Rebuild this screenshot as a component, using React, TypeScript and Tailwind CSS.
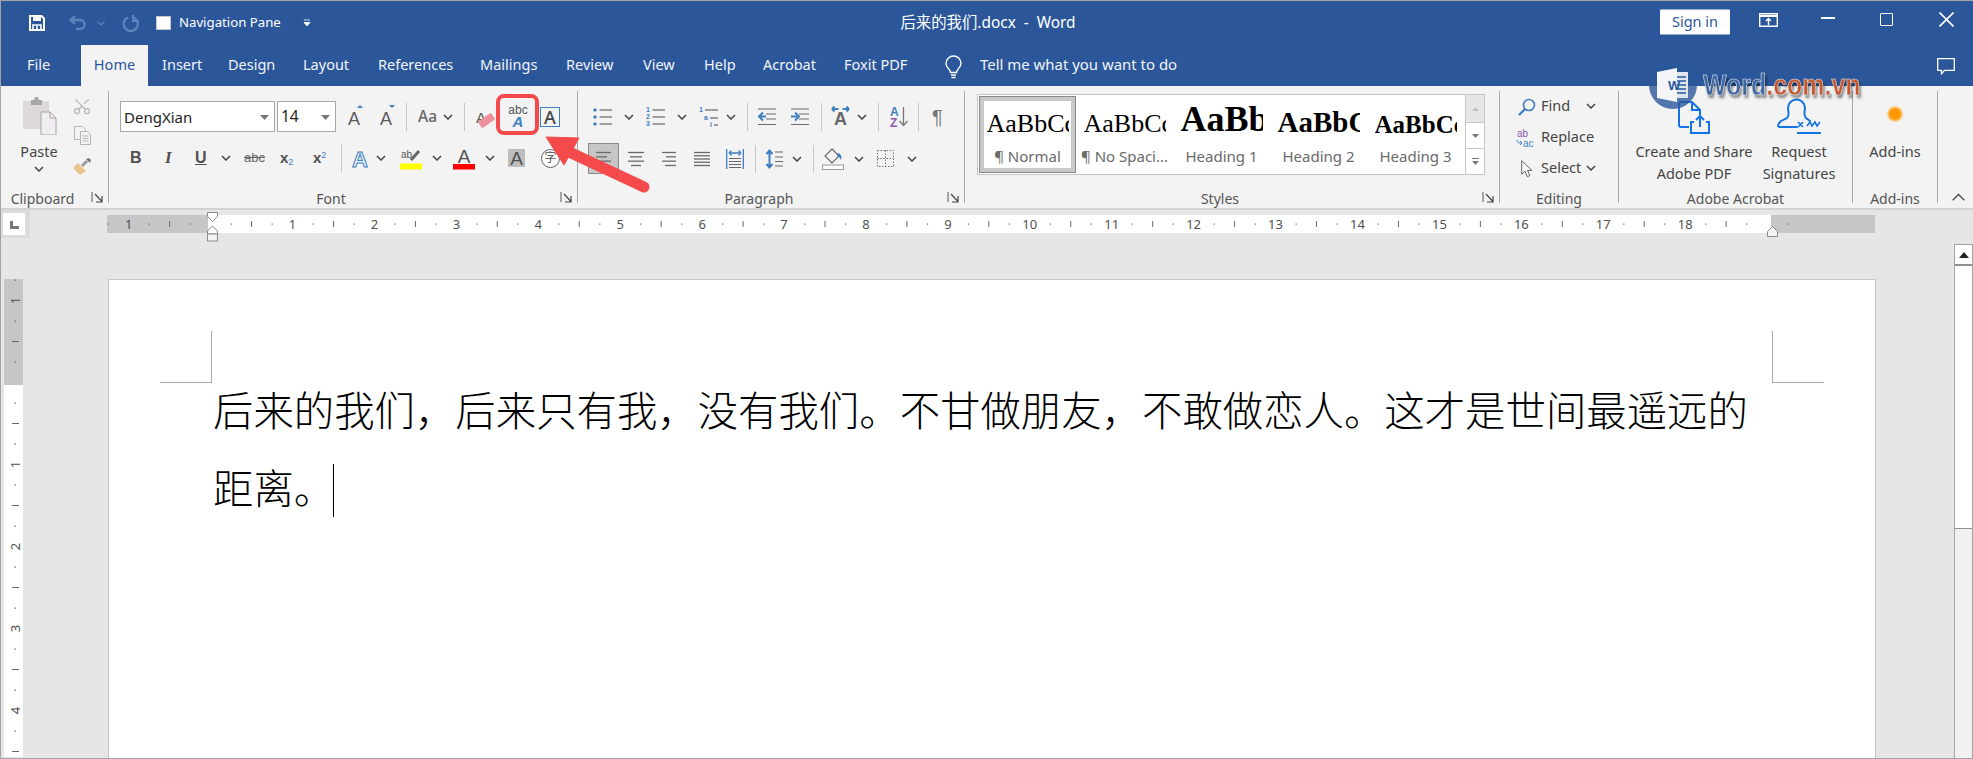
import { Scissors } from "lucide-react";

const GRAY = "#5a5a5a";
const BLUE = "#3f7fbf";
const SANS = "Liberation Sans";

function Chev({ className = "" }: { className?: string }) {
  return (
    <svg width="10" height="6" viewBox="0 0 10 6" className={`shrink-0 ${className}`}>
      <path d="M1 1l4 4 4-4" fill="none" stroke="#444" strokeWidth="1.5" />
    </svg>
  );
}

function Launcher() {
  return (
    <svg width="12" height="12" viewBox="0 0 12 12">
      <path d="M1 1v10" stroke="#555" strokeWidth="1" />
      <path d="M4 3l6.5 7M11 5v6H5" fill="none" stroke="#444" strokeWidth="1.2" />
    </svg>
  );
}

function Sep({ className = "", h = "h-[28px]" }: { className?: string; h?: string }) {
  return <div className={`w-px shrink-0 bg-[#c6c6c6] ${h} ${className}`} />;
}

function GroupLabel({ text, launcher = true }: { text: string; launcher?: boolean }) {
  return (
    <div className="-mb-[3px] mt-auto flex h-[14px] shrink-0 items-center">
      <div className="flex-1 text-center text-[14px] leading-[14px] text-[#555]">{text}</div>
      {launcher && (
        <div className="flex w-[24px] -translate-y-[2px] justify-end pr-[5px]">
          <Launcher />
        </div>
      )}
    </div>
  );
}

function Glyph({ w, h = 22, children, className = "" }: { w: number; h?: number; children: React.ReactNode; className?: string }) {
  return (
    <svg width={w} height={h} viewBox={`0 0 ${w} ${h}`} className={`shrink-0 overflow-visible ${className}`}>
      {children}
    </svg>
  );
}

function Lines({ w, rows }: { w: number; rows: [number, number][] }) {
  return (
    <Glyph w={w} h={20}>
      {rows.map(([x, l], i) => (
        <path key={i} d={`M${x} ${3.5 + (i * 13) / (rows.length - 1)}h${l}`} stroke="#6a6a6a" strokeWidth="1.3" />
      ))}
    </Glyph>
  );
}

function Bullets() {
  return (
    <Glyph w={19} h={20}>
      {[3, 10, 17].map((y) => (
        <g key={y}>
          <circle cx="2" cy={y} r="1.7" fill={BLUE} />
          <path d={`M6.5 ${y}h12.5`} stroke="#666" strokeWidth="1.2" />
        </g>
      ))}
    </Glyph>
  );
}

function Numbers() {
  return (
    <Glyph w={19} h={20}>
      {[5, 12, 19].map((y, i) => (
        <g key={y}>
          <text x="0" y={y} fontSize="7" fontWeight="700" fontFamily={SANS} fill={BLUE}>
            {i + 1}
          </text>
          <path d={`M6.5 ${y - 2}h12.5`} stroke="#666" strokeWidth="1.2" />
        </g>
      ))}
    </Glyph>
  );
}

function Multilevel() {
  return (
    <Glyph w={19} h={20}>
      <text x="0" y="5" fontSize="7" fontWeight="700" fontFamily={SANS} fill={BLUE}>1</text>
      <path d="M6 3h13" stroke="#666" strokeWidth="1.2" />
      <text x="5" y="13" fontSize="7" fontWeight="700" fontFamily={SANS} fill={BLUE}>a</text>
      <path d="M11 11h8" stroke="#666" strokeWidth="1.2" />
      <text x="11" y="20" fontSize="7" fontWeight="700" fontFamily={SANS} fill={BLUE}>i</text>
      <path d="M15 18h4" stroke="#666" strokeWidth="1.2" />
    </Glyph>
  );
}

function Indent({ flip }: { flip?: boolean }) {
  return (
    <Glyph w={18} h={18}>
      <path d="M0 1h18M8 6h10M8 11h10M0 16.5h18" stroke="#6a6a6a" strokeWidth="1.2" />
      {flip ? (
        <path d="M0 8.5h6M4 4.5l4 4-4 4" fill="none" stroke={BLUE} strokeWidth="2" />
      ) : (
        <path d="M8 8.5H2M5 4.5l-4 4 4 4" fill="none" stroke={BLUE} strokeWidth="2" />
      )}
    </Glyph>
  );
}

function StyleItem({ preview, label, selected }: { preview: React.ReactNode; label: string; selected?: boolean }) {
  return (
    <div className={`flex h-full flex-col items-center ${selected ? "w-[97px] border border-[#8a8a8a] bg-[#c9c9c9] p-[4px]" : "w-[97px]"}`}>
      <div className={`flex h-full w-full flex-col items-center bg-white ${selected ? "" : "pt-[5px]"}`}>
        <div className="flex h-[40px] w-[82px] items-end overflow-hidden whitespace-nowrap pb-[4px] font-['Liberation_Serif',serif] leading-none text-black">
          {preview}
        </div>
        <div className="mt-[4.5px] whitespace-nowrap text-[15px] leading-[20px] text-[#6a6a6a]">{label}</div>
      </div>
    </div>
  );
}

function HRuler() {
  const ticks = Array.from({ length: 83 }, (_, n) => n - 5);
  return (
    <svg width="1768" height="18" viewBox="0 0 1768 18" className="absolute left-0 top-0">
      {ticks.map((i) => {
        const x = 103.6 + i * 20.48;
        // origin and the 19cm mark sit under the indent markers
        if (i === 0 || i === 76) return null;
        if (i % 4 === 0)
          return (
            <text key={i} x={x} y="14" textAnchor="middle" fontSize="13" fontFamily="Noto Sans" fill="#505050">
              {Math.abs(i / 4)}
            </text>
          );
        if (i % 2 === 0) return <path key={i} d={`M${x} 6v6`} stroke="#666" strokeWidth="1" />;
        return <rect key={i} x={x - 0.5} y="8.5" width="1.2" height="1.2" fill="#666" />;
      })}
    </svg>
  );
}

function VRuler() {
  const ticks = Array.from({ length: 25 }, (_, n) => n - 5);
  return (
    <svg width="19" height="478" viewBox="0 0 19 478" className="absolute left-0 top-0">
      {ticks.map((i) => {
        const y = 103.5 + i * 20.5;
        if (i === 0) return null;
        if (i % 4 === 0)
          return (
            <text key={i} x="11" y={y} textAnchor="middle" fontSize="13" fontFamily="Noto Sans" fill="#505050" transform={`rotate(-90 11 ${y}) translate(0 4.5)`}>
              {Math.abs(i / 4)}
            </text>
          );
        if (i % 2 === 0) return <path key={i} d={`M8 ${y}h7`} stroke="#666" strokeWidth="1" />;
        return <rect key={i} x="10.5" y={y - 0.5} width="1.3" height="1.3" fill="#666" />;
      })}
    </svg>
  );
}

export default function App() {
  return (
    <div className="relative flex h-[759px] w-[1973px] flex-col overflow-hidden border-b border-l border-t border-[#a3a3a3] bg-[#e6e6e6] font-['Noto_Sans','Noto_Sans_CJK_SC',sans-serif]">
      {/* title bar */}
      <div className="flex h-[44px] shrink-0 items-center bg-[#2b579a] text-white">
        <svg width="16" height="16" viewBox="0 0 16 16" className="ml-[28px] shrink-0">
          <path d="M1 1h11.5L15 3.5V15H1z" fill="none" stroke="#fff" strokeWidth="2" />
          <path d="M4 1h8v5H4z" fill="#fff" />
          <path d="M4 15v-5h8v5M8 11v4" fill="none" stroke="#fff" strokeWidth="1.6" />
        </svg>
        <svg width="17" height="16" viewBox="0 0 17 16" className="ml-[24px] shrink-0">
          <path d="M2 5h9a4.5 4.5 0 0 1 0 9H7" fill="none" stroke="#5b82bb" strokeWidth="2.4" />
          <path d="M6 1L1.5 5 6 9" fill="none" stroke="#5b82bb" strokeWidth="2.4" />
        </svg>
        <svg width="8" height="5" viewBox="0 0 8 5" className="ml-[11px] shrink-0">
          <path d="M.5.500L4 4 7.500.5" fill="none" stroke="#5b82bb" strokeWidth="1.2" />
        </svg>
        <svg width="18" height="18" viewBox="0 0 18 18" className="ml-[17px] shrink-0">
          <path d="M6 3.500a7 7 0 1 0 5.500 0" fill="none" stroke="#5b82bb" strokeWidth="2.4" />
          <path d="M11 1v6h6" fill="none" stroke="#5b82bb" strokeWidth="2.2" />
        </svg>
        <div className="ml-[16px] h-[14px] w-[15px] shrink-0 border border-[#c8c8c8] bg-white" />
        <span className="ml-[8px] w-[99px] shrink-0 whitespace-nowrap text-[13.2px] leading-none">Navigation Pane</span>
        <svg width="8" height="8" viewBox="0 0 8 8" className="ml-[25px] shrink-0">
          <path d="M1 1h6M1 3.500h6l-3 3.500z" fill="#fff" stroke="#fff" strokeWidth=".8" />
        </svg>
        <div className="ml-[589px] flex w-[176px] shrink-0 justify-center whitespace-nowrap text-[15.4px] leading-none">后来的我们.docx &nbsp;-&nbsp; Word</div>
        <div className="ml-[584px] flex h-[25px] w-[70px] shrink-0 -translate-y-[1.5px] items-center justify-center rounded-[1px] bg-white text-[14.5px] text-[#2b579a]">Sign in</div>
        <svg width="19" height="14" viewBox="0 0 19 14" className="ml-[29px] shrink-0 -translate-y-[3px]">
          <path d="M.7.700h17.600v12.600H.7z" fill="none" stroke="#fff" strokeWidth="1.4" />
          <path d="M1 3h17" stroke="#fff" strokeWidth="2" />
          <path d="M9.500 12V6M7 8l2.500-2.500L12 8" fill="none" stroke="#fff" strokeWidth="1.4" />
        </svg>
        <div className="ml-[43px] h-[1.5px] w-[14px] shrink-0 -translate-y-[5px] bg-white" />
        <div className="ml-[45px] h-[13px] w-[13px] shrink-0 -translate-y-[4px] rounded-[1px] border-[1.5px] border-white" />
        <svg width="15" height="15" viewBox="0 0 15 15" className="ml-[46px] shrink-0 -translate-y-[4px]">
          <path d="M.5.500l14 14M14.500.500l-14 14" stroke="#fff" strokeWidth="1.6" />
        </svg>
      </div>

      {/* tabs */}
      <div className="flex h-[41px] shrink-0 items-start bg-[#2b579a] pt-[11px] text-[14.5px] leading-[16px] text-[#f1f4f9]">
        <span className="ml-[26px] w-[25px] shrink-0 whitespace-nowrap">File</span>
        <div className="-mt-[11px] ml-[29px] flex h-[41px] w-[67px] shrink-0 justify-center bg-[#f3f3f3] pt-[11px] text-[#2b579a]">Home</div>
        <span className="ml-[14px] w-[39px] shrink-0 whitespace-nowrap">Insert</span>
        <span className="ml-[27px] w-[48px] shrink-0 whitespace-nowrap">Design</span>
        <span className="ml-[27px] w-[47px] shrink-0 whitespace-nowrap">Layout</span>
        <span className="ml-[28px] w-[74px] shrink-0 whitespace-nowrap">References</span>
        <span className="ml-[28px] w-[58px] shrink-0 whitespace-nowrap">Mailings</span>
        <span className="ml-[28px] w-[49px] shrink-0 whitespace-nowrap">Review</span>
        <span className="ml-[28px] w-[33px] shrink-0 whitespace-nowrap">View</span>
        <span className="ml-[28px] w-[32px] shrink-0 whitespace-nowrap">Help</span>
        <span className="ml-[27px] w-[54px] shrink-0 whitespace-nowrap">Acrobat</span>
        <span className="ml-[27px] w-[65px] shrink-0 whitespace-nowrap">Foxit PDF</span>
        <svg width="17" height="24" viewBox="0 0 17 24" className="-mt-px ml-[36px] shrink-0">
          <path d="M5.500 17.500c0-3-4.500-5-4.500-9a7.500 7.500 0 0 1 15 0c0 4-4.500 6-4.500 9z" fill="none" stroke="#fff" strokeWidth="1.4" />
          <path d="M6 20h5M6.500 22.500h4" stroke="#fff" strokeWidth="1.4" />
        </svg>
        <span className="ml-[18px] w-[196px] shrink-0 whitespace-nowrap text-[14.95px]">Tell me what you want to do</span>
        <svg width="18" height="17" viewBox="0 0 18 17" className="ml-[761px] mt-[2px] shrink-0">
          <path d="M.7.700h16.600v11.600H7.500l-3 3.500v-3.500H.7z" fill="none" stroke="#fff" strokeWidth="1.3" />
        </svg>
      </div>

      {/* ribbon */}
      <div className="flex h-[124px] shrink-0 border-b-2 border-[#d2d2d2] bg-[#f3f3f3] py-[5px]">
        {/* clipboard */}
        <div className="flex w-[108px] shrink-0 border-r border-[#a8a8a8]">
          <div className="flex w-full flex-col">
            <div className="flex">
              <div className="ml-[19px] mt-[6px] flex w-[38px] shrink-0 flex-col items-center">
                <svg width="34" height="38" viewBox="0 0 34 38" className="translate-x-px">
                  <path d="M0 4h26v28H0z" fill="#dcd8dc" />
                  <path d="M8 3h3l1-3h3l1 3h3v5H8z" fill="#a8a4a8" />
                  <path d="M18 15h9l6 6v17H18z" fill="#f0eef0" stroke="#a8a4a8" />
                  <path d="M27 15v6h6" fill="none" stroke="#a8a4a8" />
                </svg>
                <span className="mt-[6px] text-[14.5px] leading-[20px] text-[#444]">Paste</span>
                <Chev className="mt-[5px]" />
              </div>
              <div className="ml-[15px] mt-[5px] flex w-[18px] shrink-0 flex-col items-center">
                <Scissors size={20} strokeWidth={1.5} color="#b5b5b5" className="-rotate-90" />
                <svg width="17" height="19" viewBox="0 0 17 19" className="mt-[10px]">
                  <path d="M.5.500h8l3 3v10H.5z" fill="#f3f3f3" stroke="#b5b5b5" />
                  <path d="M6.500 5.500h7l3 3v10h-10z" fill="#f3f3f3" stroke="#b5b5b5" />
                  <path d="M8.500 10h6M8.500 12.500h6M8.500 15h6" stroke="#b5b5b5" />
                </svg>
                <svg width="18" height="17" viewBox="0 0 18 17" className="mt-[13px]">
                  <path d="M9 8l5-5" stroke="#9a9a9a" strokeWidth="3" />
                  <path d="M13 1l3-1 2 2-1 3z" fill="#777" />
                  <path d="M5 5l8 8-6 4-7-7z" fill="#e9c48e" />
                </svg>
              </div>
            </div>
            <GroupLabel text="Clipboard" />
          </div>
        </div>

        {/* font */}
        <div className="flex w-[469px] shrink-0 flex-col border-r border-[#a8a8a8]">
          <div className="mt-[10px] flex h-[31px] items-center">
            <div className="ml-[11px] flex h-[31px] w-[155px] shrink-0 items-center justify-between border border-[#a8a8a8] bg-white pl-[3px] pr-[5px] pt-px text-[15px] text-[#222]">
              DengXian
              <svg width="9" height="5" viewBox="0 0 9 5"><path d="M0 0h9L4.500 5z" fill="#777" /></svg>
            </div>
            <div className="ml-[2px] flex h-[31px] w-[59px] shrink-0 items-center justify-between border border-[#a8a8a8] bg-white pl-[3px] pr-[5px] pt-px text-[15.5px] text-[#222]">
              14
              <svg width="9" height="5" viewBox="0 0 9 5"><path d="M0 0h9L4.500 5z" fill="#777" /></svg>
            </div>
            <Glyph w={14} className="ml-[12px] -translate-y-[2px]">
              <text x="0" y="21" fontSize="18" fontFamily={SANS} fill={GRAY}>A</text>
              <path d="M9 4l3-3 3 3z" fill={BLUE} />
            </Glyph>
            <Glyph w={14} className="ml-[18px] -translate-y-[2px]">
              <text x="0" y="21" fontSize="18" fontFamily={SANS} fill={GRAY}>A</text>
              <path d="M9 1h6l-3 3z" fill={BLUE} />
            </Glyph>
            <Sep className="ml-[12px]" />
            <span className="ml-[11px] w-[17px] shrink-0 whitespace-nowrap text-[15.5px] font-medium text-[#666]">Aa</span>
            <Chev className="ml-[8px]" />
            <Sep className="ml-[11px]" />
            <Glyph w={19} className="ml-[11px]">
              <text x="0" y="16.500" fontSize="15" fontFamily={SANS} fill={GRAY}>A</text>
              <rect x="2.500" y="10.500" width="16" height="8" rx="1.500" fill="#ee8f9c" transform="rotate(-35 10.500 14.500)" />
            </Glyph>
            <div className="ml-px flex h-[41px] w-[43px] shrink-0 -translate-y-[2px] items-center justify-center rounded-[8px] border-4 border-[#f44a4c]">
              <Glyph w={22} h={26} className="translate-y-[2px]">
                <text x="11" y="10" textAnchor="middle" fontSize="12" fontFamily={SANS} fill="#555">abc</text>
                <text x="11" y="23" textAnchor="middle" fontSize="15" fontWeight="700" fontStyle="italic" fontFamily={SANS} fill={BLUE}>A</text>
              </Glyph>
            </div>
            <div className="ml-px flex h-[20px] w-[20px] shrink-0 items-center justify-center border border-[#3f7fbf] text-[18px] font-medium leading-none text-[#444]">A</div>
          </div>
          <div className="mt-[11px] flex h-[30px] items-center text-[#505050]">
            <span className="ml-[21px] w-[9px] shrink-0 font-['Liberation_Sans'] text-[16px] font-bold">B</span>
            <span className="ml-[26px] w-[7px] shrink-0 font-['Liberation_Serif'] text-[17px] font-bold italic">I</span>
            <span className="ml-[23px] w-[11px] shrink-0 font-['Liberation_Sans'] text-[16px] font-bold underline">U</span>
            <Chev className="ml-[15px]" />
            <span className="ml-[13px] w-[20px] shrink-0 font-['Liberation_Sans'] text-[13px] text-[#666] line-through">abc</span>
            <span className="ml-[16px] w-[15px] shrink-0 whitespace-nowrap font-['Liberation_Sans'] text-[15px] font-bold">
              x<sub className="text-[9px] font-normal text-[#3f7fbf]">2</sub>
            </span>
            <span className="ml-[18px] w-[15px] shrink-0 whitespace-nowrap font-['Liberation_Sans'] text-[15px] font-bold">
              x<sup className="text-[9px] font-normal text-[#3f7fbf]">2</sup>
            </span>
            <Sep className="ml-[13px]" />
            <Glyph w={14} className="ml-[11px]">
              <text x="7" y="20" textAnchor="middle" fontSize="22" fontWeight="700" fontFamily={SANS} fill="#e8f1fb" stroke={BLUE} strokeWidth="1">A</text>
            </Glyph>
            <Chev className="ml-[9px]" />
            <Glyph w={22} className="ml-[14px]">
              <text x="1" y="11" fontSize="10" fontFamily={SANS} fill="#555">ab</text>
              <path d="M11 13l8-9" stroke="#666" strokeWidth="3" />
              <rect x="0" y="16.500" width="22" height="6" fill="#ffff00" />
            </Glyph>
            <Chev className="ml-[10px]" />
            <Glyph w={22} className="ml-[11px]">
              <text x="11" y="15.500" textAnchor="middle" fontSize="19" fontFamily={SANS} fill="#505050">A</text>
              <rect x="0" y="17" width="22" height="5.500" fill="#ff0000" />
            </Glyph>
            <Chev className="ml-[10px]" />
            <div className="ml-[13px] flex h-[18px] w-[17px] shrink-0 items-center justify-center bg-[#bdbdbd] font-['Liberation_Sans'] text-[19px] leading-none text-[#505050]">A</div>
            <div className="ml-[16px] flex h-[19px] w-[19px] shrink-0 items-center justify-center rounded-full border border-[#666] bg-white text-[12px] leading-none text-[#555]">字</div>
          </div>
          <GroupLabel text="Font" />
        </div>

        {/* paragraph */}
        <div className="flex w-[387px] shrink-0 flex-col border-r border-[#a8a8a8]">
          <div className="mt-[10px] flex h-[31px] items-center">
            <div className="ml-[15px]"><Bullets /></div>
            <Chev className="ml-[12px]" />
            <div className="ml-[12px]"><Numbers /></div>
            <Chev className="ml-[12px]" />
            <div className="ml-[12px]"><Multilevel /></div>
            <Chev className="ml-[8px]" />
            <Sep className="ml-[11px]" />
            <div className="ml-[10px]"><Indent /></div>
            <div className="ml-[15px]"><Indent flip /></div>
            <Sep className="ml-[12px]" />
            <Glyph w={19} className="ml-[9px] -translate-y-px">
              <text x="9.500" y="20" textAnchor="middle" fontSize="18" fontWeight="700" fontFamily={SANS} fill="#666">A</text>
              <path d="M1 4h6.500M1 4l2.500-2.500M1 4l2.500 2.500M18 4h-6.500M18 4l-2.500-2.500M18 4l-2.500 2.500" fill="none" stroke={BLUE} strokeWidth="1.800" />
            </Glyph>
            <Chev className="ml-[7px]" />
            <Sep className="ml-[11px]" />
            <Glyph w={18} className="ml-[11px]">
              <text x="0" y="10" fontSize="12" fontWeight="700" fontFamily={SANS} fill={BLUE}>A</text>
              <text x="0" y="21" fontSize="12" fontWeight="700" fontFamily={SANS} fill="#8a57b0">Z</text>
              <path d="M13.500 1v18M9.500 15l4 4.500 4-4.500" fill="none" stroke="#777" strokeWidth="1.300" />
            </Glyph>
            <Sep className="ml-[10px]" />
            <span className="ml-[13px] w-[11px] shrink-0 font-['Liberation_Sans'] text-[20px] leading-none text-[#777]">¶</span>
          </div>
          <div className="mt-[11px] flex h-[31px] items-center">
            <div className="ml-[10px] flex h-[31px] w-[31px] shrink-0 items-center justify-center border border-[#8a8a8a] bg-[#c6c6c6]">
              <Lines w={15} rows={[[0, 15], [0, 11], [0, 15], [0, 11]]} />
            </div>
            <div className="ml-[9px]"><Lines w={16} rows={[[0, 16], [2, 12], [0, 16], [3, 10]]} /></div>
            <div className="ml-[18px]"><Lines w={14} rows={[[0, 14], [4, 10], [0, 14], [3, 11]]} /></div>
            <div className="ml-[18px]"><Lines w={16} rows={[[0, 16], [0, 16], [0, 16], [0, 16], [0, 16]]} /></div>
            <Glyph w={18} h={20} className="ml-[16px]">
              <path d="M.7 0v20M17.300 0v20" stroke={BLUE} strokeWidth="1.300" />
              <path d="M3 4h12M3 4l2.500-2.500M3 4l2.500 2.500M15 4l-2.500-2.500M15 4l-2.500 2.500" fill="none" stroke={BLUE} strokeWidth="1.300" />
              <path d="M3 9.500h12M3 12.500h12M3 15.500h12M3 18.500h12" stroke="#666" strokeWidth="1.100" />
            </Glyph>
            <Sep className="ml-[11px]" />
            <Glyph w={17} h={20} className="ml-[10px]">
              <path d="M3.500 2v16M.5 5l3-3.500 3 3.500M.5 15l3 3.500 3-3.500" fill="none" stroke={BLUE} strokeWidth="2" />
              <path d="M9 3h8M9 8h8M9 12.500h8M9 17h8" stroke="#666" strokeWidth="1.200" />
            </Glyph>
            <Chev className="ml-[9px]" />
            <Sep className="ml-[11px]" />
            <Glyph w={22} h={22} className="ml-[8px]">
              <path d="M10 1l7 7-7 7-7-7z" fill="#f3f3f3" stroke="#666" strokeWidth="1.200" />
              <path d="M16 5c3 1 4 4 3 7-1-2-2-3-4-4z" fill={BLUE} />
              <rect x=".5" y="17" width="21" height="4.500" fill="#fff" stroke="#999" />
            </Glyph>
            <Chev className="ml-[10px]" />
            <Glyph w={17} h={17} className="ml-[13px]">
              <path d="M.5.500h16v16H.5zM8.500.500v16M.5 8.500h16" fill="none" stroke="#777" strokeDasharray="1.500 1.500" />
            </Glyph>
            <Chev className="ml-[13px]" />
          </div>
          <GroupLabel text="Paragraph" />
        </div>

        {/* styles */}
        <div className="flex w-[535px] shrink-0 flex-col border-r border-[#a8a8a8]">
          <div className="ml-[12px] mt-[3px] flex h-[81px] w-[508px] border border-[#c6c6c6] bg-white">
            <div className="flex h-full flex-1 p-px">
              <StyleItem selected preview={<span className="text-[26px]">AaBbCc</span>} label="¶ Normal" />
              <StyleItem preview={<span className="text-[26px]">AaBbCc</span>} label="¶ No Spaci..." />
              <StyleItem preview={<span className="text-[36px] font-bold">AaBb</span>} label="Heading 1" />
              <StyleItem preview={<span className="text-[29px] font-bold">AaBbC</span>} label="Heading 2" />
              <StyleItem preview={<span className="text-[25px] font-bold">AaBbCc</span>} label="Heading 3" />
            </div>
            <div className="flex w-[19px] shrink-0 flex-col border-l border-[#c6c6c6]">
              <div className="flex h-[28px] items-center justify-center border-b border-[#c6c6c6] bg-[#e6e6e6]">
                <svg width="7" height="4" viewBox="0 0 7 4"><path d="M0 4l3.500-4L7 4z" fill="#c0c0c0" /></svg>
              </div>
              <div className="flex h-[26px] items-center justify-center border-b border-[#c6c6c6]">
                <svg width="7" height="4" viewBox="0 0 7 4"><path d="M0 0l3.500 4L7 0z" fill="#777" /></svg>
              </div>
              <div className="flex flex-1 items-center justify-center">
                <svg width="7" height="7" viewBox="0 0 7 7"><path d="M0 0h7v1H0zM0 3h7L3.500 7z" fill="#777" /></svg>
              </div>
            </div>
          </div>
          <GroupLabel text="Styles" />
        </div>

        {/* editing */}
        <div className="flex w-[119px] shrink-0 flex-col border-r border-[#a8a8a8] text-[14.5px] leading-none text-[#444]">
          <div className="flex h-[31px] items-center">
            <svg width="20" height="18" viewBox="0 0 20 18" className="ml-[17px] shrink-0">
              <circle cx="12" cy="7" r="5.500" fill="none" stroke={BLUE} strokeWidth="1.600" />
              <path d="M8 11l-6 6" stroke={BLUE} strokeWidth="2.400" />
            </svg>
            <span className="ml-[4px] w-[30px] shrink-0 -translate-y-px">Find</span>
            <Chev className="ml-[15px] -translate-y-px" />
          </div>
          <div className="flex h-[31px] items-center">
            <Glyph w={20} h={18} className="ml-[16px]">
              <text x="1" y="8" fontSize="10" fontFamily={SANS} fill="#8a57b0">ab</text>
              <text x="7" y="18" fontSize="10" fontFamily={SANS} fill={BLUE}>ac</text>
              <path d="M1 11c0 3 2 3 5 3M4 12l2 2-2 2" fill="none" stroke={BLUE} strokeWidth="1" />
            </Glyph>
            <span className="ml-[5px] w-[54px] shrink-0 -translate-y-px">Replace</span>
          </div>
          <div className="flex h-[31px] items-center">
            <svg width="12" height="18" viewBox="0 0 12 18" className="ml-[21px] shrink-0">
              <path d="M.7.700v13.500l3.300-3 2.300 5.500 2.500-1-2.300-5.300h4.500z" fill="#f8f8f8" stroke="#666" />
            </svg>
            <span className="ml-[8px] w-[41px] shrink-0 -translate-y-px">Select</span>
            <Chev className="ml-[4px] -translate-y-px" />
          </div>
          <GroupLabel text="Editing" launcher={false} />
        </div>

        {/* acrobat */}
        <div className="flex w-[234px] shrink-0 flex-col border-r border-[#a8a8a8]">
          <div className="flex text-center text-[14.5px] leading-[22px] text-[#444]">
            <div className="ml-[6px] flex w-[138px] shrink-0 flex-col items-center pt-[10px]">
              <svg width="32" height="34" viewBox="0 0 32 34" className="mb-[5px]">
                <path d="M11 26H3a2 2 0 0 1-2-2V3a2 2 0 0 1 2-2h11l8 8v5" fill="none" stroke="#1473e6" strokeWidth="2" strokeLinejoin="round" />
                <path d="M14 1v8h8" fill="none" stroke="#1473e6" strokeWidth="2" />
                <path d="M16 21h-3v11h18V21h-3M22 26V15M18 19l4-4 4 4" fill="none" stroke="#1473e6" strokeWidth="2" />
              </svg>
              Create and Share
              <br />
              Adobe PDF
            </div>
            <div className="flex w-[72px] shrink-0 flex-col items-center pt-[7px]">
              <svg width="44" height="37" viewBox="0 0 44 37" className="mb-[5px]">
                <path d="M1 28c0-5 6-6 9-8 3-3 1-6 1-10a8.500 8.500 0 0 1 17 0c0 3-2 7 1 10 1 1 3 2 4 3M2 29h18" fill="none" stroke="#1473e6" strokeWidth="2" strokeLinecap="round" />
                <path d="M21 24l5 5M26 24l-5 5M30 28l3-4 2 4 3-4 2 4 3-4" fill="none" stroke="#1473e6" strokeWidth="1.600" />
                <path d="M20 35h24" stroke="#1473e6" strokeWidth="2" />
              </svg>
              Request
              <br />
              Signatures
            </div>
          </div>
          <GroupLabel text="Adobe Acrobat" launcher={false} />
        </div>

        {/* add-ins */}
        <div className="flex w-[85px] shrink-0 flex-col items-stretch border-r border-[#a8a8a8]">
          <div className="flex flex-col items-center pt-[16px] text-[14.5px] leading-[22px] text-[#444]">
            <div className="mb-[19px] h-[14px] w-[14px] rounded-full bg-[#ff9800] blur-[1px]" />
            Add-ins
          </div>
          <GroupLabel text="Add-ins" launcher={false} />
        </div>
        <div className="ml-[14px] flex items-end pb-[2px]">
          <svg width="13" height="8" viewBox="0 0 13 8"><path d="M.7 7.300L6.500 1.500l5.800 5.800" fill="none" stroke="#444" strokeWidth="1.300" /></svg>
        </div>
      </div>

      {/* workspace */}
      <div className="flex min-h-0 flex-1">
        <div className="flex w-[1953px] shrink-0 flex-col">
          <div className="flex h-[69px] shrink-0 items-start">
            <div className="flex h-[28px] w-[29px] shrink-0 items-center justify-start bg-[#dcdcdc] pl-[2px]">
              <div className="flex h-[22px] w-[22px] items-center justify-center bg-white">
                <div className="mt-[2px] h-[8px] w-[9px] border-b-[3px] border-l-[3px] border-[#777]" />
              </div>
            </div>
            <div className="relative ml-[77px] mt-[5px] flex h-[18px] w-[1768px] shrink-0 bg-white">
              <div className="h-full w-[101px] bg-[#c6c6c6]" />
              <div className="ml-auto h-full w-[104px] bg-[#c6c6c6]" />
              <HRuler />
              <svg width="12" height="30" viewBox="0 0 12 30" className="absolute left-[100px] top-[-3px]">
                <path d="M.5.500h10v4l-5 5-5-5z" fill="#fff" stroke="#8a8a8a" />
                <path d="M5.500 14l5 5v3H.5v-3z" fill="#fff" stroke="#8a8a8a" />
                <path d="M.5 22h10v7H.5z" fill="#f3f3f3" stroke="#8a8a8a" />
              </svg>
              <svg width="12" height="11" viewBox="0 0 12 11" className="absolute left-[1660px] top-[11px]">
                <path d="M5.500.500l5 5v5H.5v-5z" fill="#f3f3f3" stroke="#8a8a8a" />
              </svg>
            </div>
          </div>
          <div className="flex min-h-0 flex-1">
            <div className="relative ml-[3px] h-[478px] w-[19px] shrink-0 bg-white">
              <div className="h-[106px] w-full bg-[#c6c6c6]" />
              <VRuler />
            </div>
            <div className="relative ml-[85px] w-[1768px] shrink-0 border-x border-t border-[#c6c6c6] bg-white pl-[104px] pt-[90px]">
              {/* page crop marks */}
              <div className="absolute left-[51px] top-[51px] h-[52px] w-[52px] border-b border-r border-[#a8a8a8]" />
              <div className="absolute left-[1663px] top-[51px] h-[52px] w-[52px] border-b border-l border-[#a8a8a8]" />
              <p className="w-[1540px] text-[40.4px] font-light leading-[78px] text-black font-['Noto_Sans_CJK_SC',sans-serif]" lang="zh-CN">
                后来的我们，后来只有我，没有我们。不甘做朋友，不敢做恋人。这才是世间最遥远的距离。
                <span className="relative inline-block h-0 w-0">
                  <span className="absolute bottom-[-13px] left-[-1px] h-[53px] w-px bg-black" />
                </span>
              </p>
            </div>
          </div>
        </div>

        {/* scrollbar */}
        <div className="mt-[34px] flex w-[19px] shrink-0 flex-col border-l border-r border-[#a3a3a3]">
          <div className="flex h-[20px] shrink-0 items-center justify-center border-t border-[#a3a3a3] bg-white">
            <svg width="10" height="6" viewBox="0 0 10 6"><path d="M0 6l5-6 5 6z" fill="#222" /></svg>
          </div>
          <div className="h-[265px] shrink-0 border-y border-t-2 border-[#909090] bg-white" />
          <div className="flex-1 bg-[#f1f1f1]" />
        </div>
      </div>

      {/* site watermark */}
      <div className="absolute left-[1648px] top-[60px] flex items-center">
        <div className="flex h-[48px] w-[48px] items-center justify-center rounded-full bg-[#2b579a]/80">
          <svg width="32" height="34" viewBox="0 0 32 34">
            <path d="M18 4h13v26H18z" fill="#dfe6f0" />
            <path d="M20 9h9M20 13h9M20 17h9M20 21h9M20 25h9" stroke="#2b579a" strokeWidth="1.400" />
            <path d="M0 4l20-4v34L0 30z" fill="#f3f5f9" />
          </svg>
        </div>
        <div className="-ml-[29px] w-0 font-['Liberation_Sans'] text-[13px] font-bold leading-none text-[#2b579a]">W</div>
        <div className="ml-[35px] origin-left scale-x-[0.86] whitespace-nowrap font-['Liberation_Sans'] text-[29px] font-bold leading-none text-[#3e669f] [-webkit-text-stroke:0.6px_#dfe6f0] [text-shadow:2px_3px_3px_rgba(0,0,0,0.5)]">
          Word<span className="text-[#c9562a]">.com.vn</span>
        </div>
      </div>

      {/* red annotation arrow */}
      <svg width="1973" height="759" viewBox="0 0 1973 759" className="pointer-events-none absolute left-0 top-0">
        <path d="M545 136L578 137L563 164z" fill="#f44a4c" stroke="#f44a4c" strokeLinejoin="round" />
        <path d="M566 150L643 186" stroke="#f44a4c" strokeWidth="11" strokeLinecap="round" />
      </svg>
    </div>
  );
}
